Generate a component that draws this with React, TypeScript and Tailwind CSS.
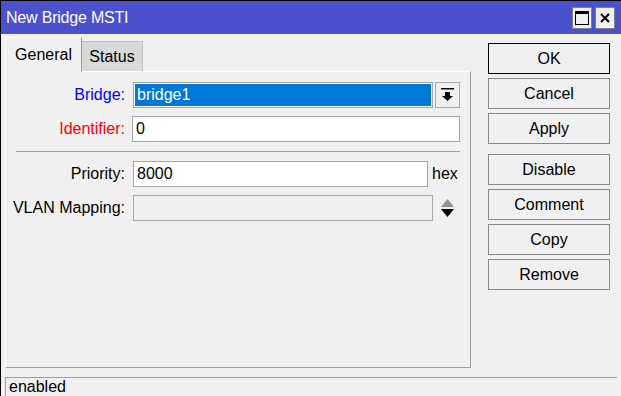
import React from "react";

const font = { fontFamily: '"Liberation Sans", Arial, sans-serif' };

const Field = ({ className = "", children }: { className?: string; children?: React.ReactNode }) => (
  <div className={`h-[26px] border border-[#a7a7a7] flex items-center px-[3px] text-[16px] ${className}`}>
    {children}
  </div>
);

const Row = ({ label, color = "text-black", children }: { label: string; color?: string; children: React.ReactNode }) => (
  <div className="flex items-center">
    <div className={`w-[120px] pr-[1px] text-right text-[16px] whitespace-nowrap ${color}`}>{label}</div>
    <div className="ml-[7px] flex items-center">{children}</div>
  </div>
);

const Btn = ({ label, primary = false }: { label: string; primary?: boolean }) => (
  <button
    className={`h-[31px] w-[122px] bg-[#f0f0f0] text-[16px] text-black flex items-center justify-center border ${
      primary ? "border-black" : "border-[#8a8a8a]"
    }`}
  >
    {label}
  </button>
);

export default function App() {
  return (
    <div style={font} className="w-[621px] h-[396px] bg-[#f0f0f0] border-l border-t border-black flex flex-col overflow-hidden select-none">
      {/* title bar */}
      <div className="h-[33px] bg-[#4b50cc] flex items-center pl-[5px] pr-[6px] shrink-0">
        <span className="text-white text-[16px] tracking-[-0.2px]">New Bridge MSTI</span>
        <div className="ml-auto flex gap-[3px] mt-[1px]">
          <div className="w-[20px] h-[22px] bg-[#f0f0f0] border border-[#808080] flex items-center justify-center">
            <div className="w-[14px] h-[14px] border border-black border-t-[3px]" />
          </div>
          <div className="w-[20px] h-[22px] bg-[#f0f0f0] border border-[#808080] flex items-center justify-center">
            <svg width="12" height="12" viewBox="0 0 12 12">
              <path d="M2 2 L10 10 M10 2 L2 10" stroke="black" strokeWidth="2" />
            </svg>
          </div>
        </div>
      </div>

      {/* body */}
      <div className="flex flex-1 min-h-0">
        <div className="ml-[4px] w-[466px] flex flex-col pt-[2px]">
          {/* tabs */}
          <div className="flex items-end h-[35px]">
            <div className="h-[35px] w-[77px] border-l border-t border-r border-l-white border-t-white border-r-[#a0a0a0] flex items-center justify-center text-[16px] -mb-[1px] relative z-10 bg-[#f0f0f0]">
              General
            </div>
            <div className="h-[30px] w-[61px] bg-[#d9d9d9] border-t border-r border-[#c0c0c0] flex items-center justify-center text-[16px]">
              Status
            </div>
          </div>
          {/* panel */}
          <div className="h-[297px] border border-t-white border-l-white border-[#a0a0a0] pt-[10px] flex flex-col">
            <div className="flex flex-col gap-[8px]">
              <Row label="Bridge:" color="text-[#0000ff]">
                <Field className="w-[300px] bg-[#0078d7] text-white shadow-[inset_0_0_0_1px_white]">bridge1</Field>
                <div className="ml-[2px] w-[25px] h-[26px] border border-[#a7a7a7] flex items-center justify-center">
                  <svg width="13" height="14" viewBox="0 0 13 14">
                    <rect x="0" y="0" width="13" height="1.5" fill="black" />
                    <path d="M4 4 H9 V8 H12 L6.5 13 L1 8 H4 Z" fill="black" />
                  </svg>
                </div>
              </Row>
              <Row label="Identifier:" color="text-[#ff0000]">
                <Field className="w-[328px] -ml-[1px] bg-white">0</Field>
              </Row>
            </div>
            <div className="ml-[10px] mr-[10px] mt-[9px] mb-[9px] h-[1px] bg-[#a0a0a0]" />
            <div className="flex flex-col gap-[8px]">
              <Row label="Priority:">
                <Field className="w-[295px] bg-white">8000</Field>
                <span className="ml-[4px] text-[16px]">hex</span>
              </Row>
              <Row label="VLAN Mapping:">
                <Field className="w-[300px] bg-[#f0f0f0]" />
                <svg className="ml-[7px]" width="15" height="20" viewBox="0 0 15 20">
                  <path d="M7.5 1 L14 9 H1 Z" fill="#909090" />
                  <path d="M1 11 H14 L7.5 19 Z" fill="black" />
                </svg>
              </Row>
            </div>
          </div>
        </div>

        {/* right buttons */}
        <div className="ml-[17px] pt-[9px] flex flex-col">
          <div className="flex flex-col gap-[4px]">
            <Btn label="OK" primary />
            <Btn label="Cancel" />
            <Btn label="Apply" />
          </div>
          <div className="mt-[10px] flex flex-col gap-[4px]">
            <Btn label="Disable" />
            <Btn label="Comment" />
            <Btn label="Copy" />
            <Btn label="Remove" />
          </div>
        </div>
      </div>

      {/* status bar */}
      <div className="ml-[4px] mr-[4px] h-[19px] border-t border-l border-[#a0a0a0] flex items-center pl-[3px] text-[16px] shrink-0">
        enabled
      </div>
    </div>
  );
}
